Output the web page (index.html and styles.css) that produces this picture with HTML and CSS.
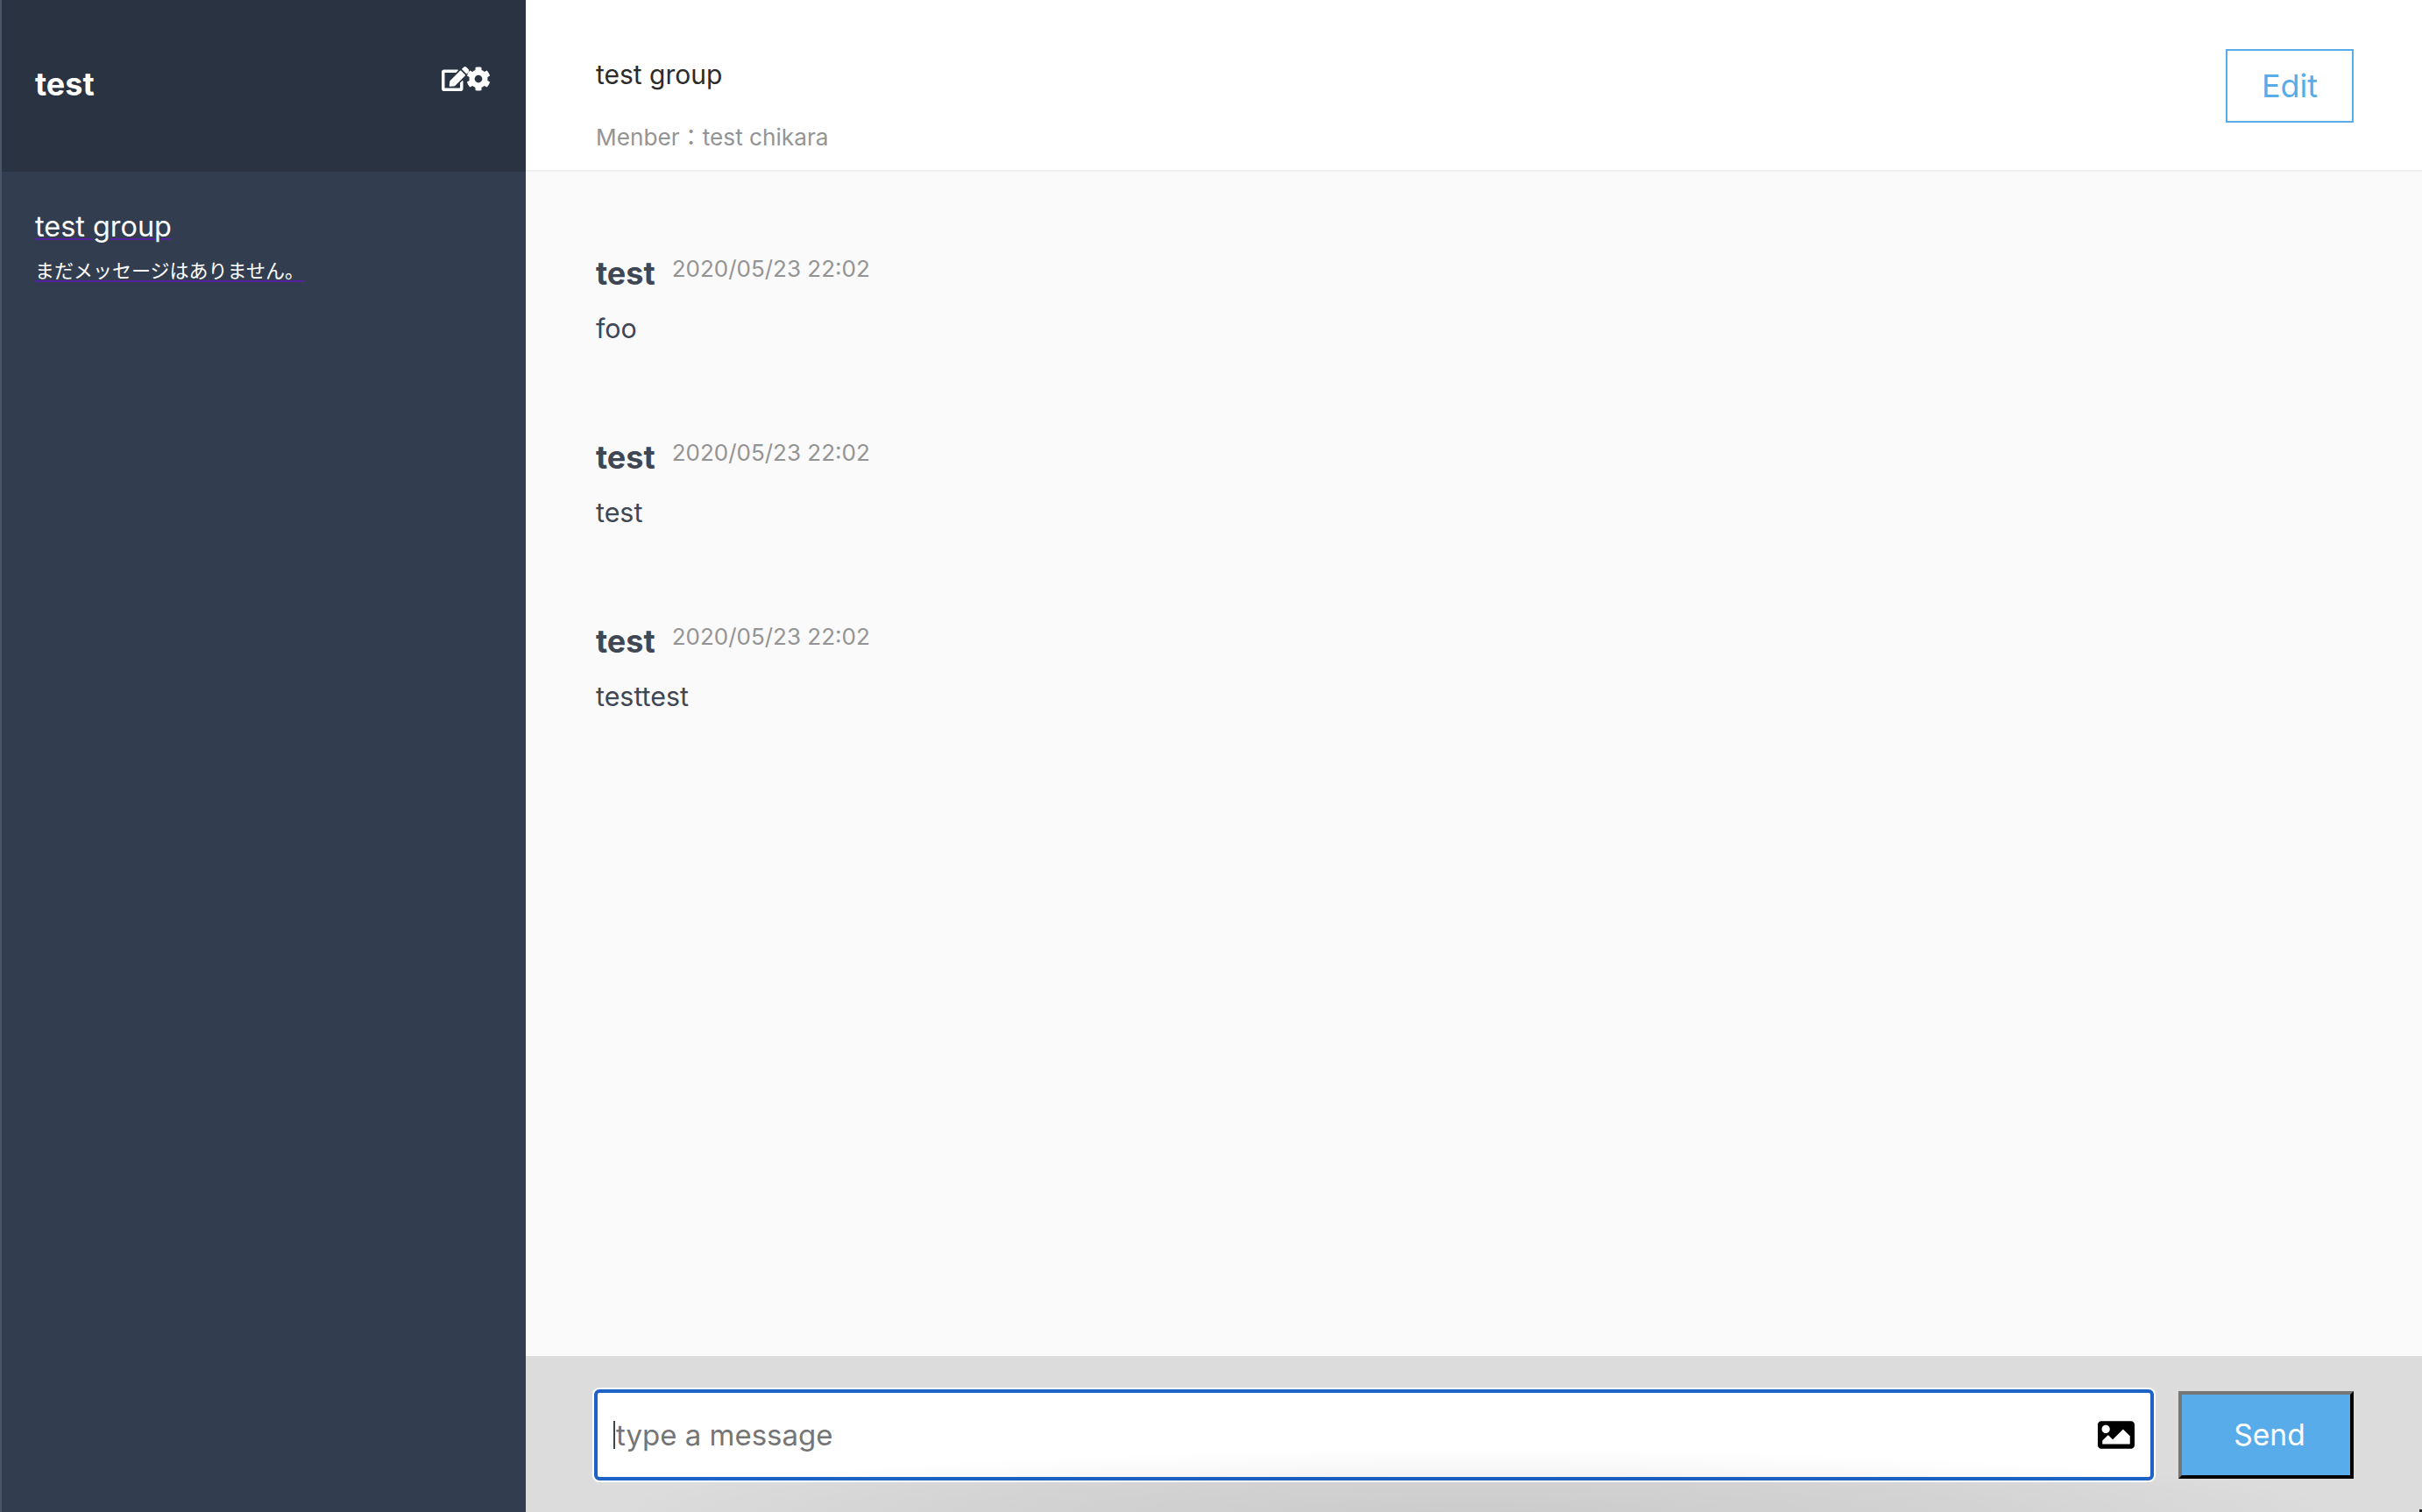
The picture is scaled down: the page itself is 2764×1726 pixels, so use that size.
FILE: index.html
```html
<!DOCTYPE html>
<html lang="ja">
<head>
<meta charset="utf-8">
<title>test</title>
<link rel="stylesheet" href="styles.css">
</head>
<body>
<div class="app">
  <aside class="sidebar">
    <header class="side-head">
      <h1 class="user-name">test</h1>
      <div class="side-icons">
        <svg class="icon-edit" viewBox="0 0 576 512"><path fill="currentColor" d="M402.6 83.2l90.2 90.2c3.8 3.8 3.8 10 0 13.8L274.4 405.6l-92.8 10.3c-12.4 1.4-22.9-9.1-21.5-21.5l10.3-92.8L388.8 83.2c3.8-3.8 10-3.8 13.8 0zm162-22.9l-48.8-48.8c-15.2-15.2-39.9-15.2-55.2 0l-35.4 35.4c-3.8 3.8-3.8 10 0 13.8l90.2 90.2c3.8 3.8 10 3.8 13.8 0l35.4-35.4c15.2-15.3 15.2-40 0-55.2zM384 346.2V448H64V128h229.8c3.2 0 6.2-1.3 8.5-3.5l40-40c7.6-7.6 2.2-20.5-8.5-20.5H48C21.5 64 0 85.5 0 112v352c0 26.5 21.5 48 48 48h352c26.5 0 48-21.5 48-48V306.2c0-10.7-12.9-16-20.5-8.5l-40 40c-2.2 2.3-3.5 5.3-3.5 8.5z"/></svg>
        <svg class="icon-cog" viewBox="0 0 512 512"><path fill="currentColor" d="M487.4 315.7l-42.6-24.6c4.3-23.2 4.3-47 0-70.2l42.6-24.6c4.9-2.8 7.1-8.6 5.5-14-11.1-35.6-30-67.8-54.7-94.6-3.8-4.1-10-5.1-14.8-2.3L380.8 110c-17.9-15.4-38.5-27.3-60.8-35.1V25.8c0-5.6-3.9-10.5-9.4-11.7-36.7-8.2-74.3-7.8-109.2 0-5.5 1.2-9.4 6.1-9.4 11.7V75c-22.2 7.9-42.8 19.8-60.8 35.1L88.7 85.5c-4.9-2.8-11-1.9-14.8 2.3-24.7 26.7-43.6 58.9-54.7 94.6-1.7 5.4.6 11.2 5.5 14L67.3 221c-4.3 23.2-4.3 47 0 70.2l-42.6 24.6c-4.9 2.8-7.1 8.6-5.5 14 11.1 35.6 30 67.8 54.7 94.6 3.8 4.1 10 5.1 14.8 2.3l42.6-24.6c17.9 15.4 38.5 27.3 60.8 35.1v49.2c0 5.6 3.9 10.5 9.4 11.7 36.7 8.2 74.3 7.8 109.2 0 5.5-1.2 9.4-6.1 9.4-11.7v-49.2c22.2-7.9 42.8-19.8 60.8-35.1l42.6 24.6c4.9 2.8 11 1.9 14.8-2.3 24.7-26.7 43.6-58.9 54.7-94.6 1.5-5.5-.7-11.3-5.6-14.1zM256 336c-44.1 0-80-35.9-80-80s35.9-80 80-80 80 35.9 80 80-35.9 80-80 80z"/></svg>
      </div>
    </header>
    <nav class="group-list">
      <a class="group-link" href="#">
        <span class="group-name">test group</span>
        <span class="group-last">まだメッセージはありません。</span>
      </a>
    </nav>
  </aside>
  <main class="chat">
    <header class="chat-head">
      <div class="chat-info">
        <div class="chat-title">test group</div>
        <div class="chat-members">Menber：test chikara</div>
      </div>
      <a class="edit-btn" href="#">Edit</a>
    </header>
    <section class="messages">
      <article class="message">
        <div class="message-meta"><span class="message-user">test</span><span class="message-date">2020/05/23 22:02</span></div>
        <p class="message-text">foo</p>
      </article>
      <article class="message">
        <div class="message-meta"><span class="message-user">test</span><span class="message-date">2020/05/23 22:02</span></div>
        <p class="message-text">test</p>
      </article>
      <article class="message">
        <div class="message-meta"><span class="message-user">test</span><span class="message-date">2020/05/23 22:02</span></div>
        <p class="message-text">testtest</p>
      </article>
    </section>
    <form class="composer">
      <div class="composer-shadow"></div>
      <label class="input-box">
        <span class="caret"></span>
        <input class="text-input" type="text" placeholder="type a message">
        <svg class="icon-image" viewBox="0 0 512 512"><path fill="currentColor" d="M464 448H48c-26.51 0-48-21.49-48-48V112c0-26.51 21.49-48 48-48h416c26.51 0 48 21.49 48 48v288c0 26.51-21.49 48-48 48zM112 120c-30.928 0-56 25.072-56 56s25.072 56 56 56 56-25.072 56-56-25.072-56-56-56zM64 384h384V272l-87.515-87.515c-4.686-4.686-12.284-4.686-16.971 0L208 320l-55.515-55.515c-4.686-4.686-12.284-4.686-16.971 0L64 336v48z"/></svg>
      </label>
      <button class="send-btn" type="button">Send</button>
    </form>
  </main>
</div>
</body>
</html>
```

FILE: styles.css
```css
* { box-sizing: border-box; }
html, body { margin: 0; height: 100%; }
body {
  font-family: Inter, "Noto Sans CJK JP", sans-serif;
  background: #fff;
  color: #404754;
  overflow: hidden;
}
.app { display: flex; height: 100vh; }

.sidebar {
  width: 600px;
  flex: none;
  background: #323e50;
  color: #fff;
  border-left: 2px solid #4a5568;
  display: flex;
  flex-direction: column;
}
.side-head {
  height: 196px;
  flex: none;
  background: #2a3342;
  padding: 0 40px 0 38px;
  display: flex;
  justify-content: space-between;
  align-items: flex-start;
}
.user-name {
  margin: 74px 0 0;
  font-size: 36px;
  line-height: 44px;
  font-weight: 700;
}
.side-icons { display: flex; margin-top: 76px; }
.icon-edit { width: 31.5px; height: 28px; display: block; }
.icon-cog { width: 28px; height: 28px; margin-left: -3px; display: block; }

.group-list { padding: 40px 38px; }
.group-link {
  display: inline-flex;
  flex-direction: column;
  align-items: flex-start;
  color: #fff;
  text-decoration: none;
}
.group-name,
.group-last {
  text-decoration: underline;
  text-decoration-color: #56209e;
  text-decoration-thickness: 2px;
}
.group-name { font-size: 32.4px; line-height: 46px; text-underline-offset: 2px; }
.group-last {
  font-size: 22px;
  line-height: 32px;
  margin-top: 11px;
  text-underline-offset: 3px;
  text-decoration-skip-ink: none;
}

.chat { flex: 1; min-width: 0; display: flex; flex-direction: column; }
.chat-head {
  height: 196px;
  flex: none;
  background: #fff;
  border-bottom: 2px solid #eee;
  padding: 0 78px 0 80px;
  display: flex;
  justify-content: space-between;
  align-items: flex-start;
}
.chat-title { font-size: 30px; line-height: 40px; margin-top: 65px; color: #2b2b2b; }
.chat-members { font-size: 26.2px; line-height: 36px; margin-top: 34px; color: #949494; }
.edit-btn {
  margin-top: 56px;
  width: 146px;
  height: 84px;
  border: 2px solid #58ace9;
  color: #58ace9;
  font-size: 36px;
  display: flex;
  align-items: center;
  justify-content: center;
  text-decoration: none;
}

.messages {
  flex: 1;
  min-height: 0;
  background: #fafafa;
  padding: 88px 80px 0;
  display: flex;
  flex-direction: column;
  gap: 90px;
}
.message { height: 120px; }
.message-meta { display: flex; align-items: flex-start; gap: 19px; height: 52px; }
.message-user { font-size: 36px; line-height: 44px; font-weight: 700; margin-top: 6px; }
.message-date { font-size: 26px; line-height: 36px; color: #949494; margin-top: 5px; }
.message-text { margin: 19px 0 0; font-size: 30.4px; line-height: 40px; }

.composer {
  position: relative;
  height: 178px;
  flex: none;
  background: #dcdcdc;
  padding: 40px 78px 0 78px;
  display: flex;
  align-items: flex-start;
  gap: 28px;
}
.composer::after {
  content: "";
  position: absolute;
  right: 0;
  bottom: 0;
  width: 3px;
  height: 3px;
  background: #222;
}
.composer-shadow {
  position: absolute;
  left: 0;
  right: 0;
  bottom: 0;
  height: 100px;
  pointer-events: none;
  z-index: 2;
  background: radial-gradient(ellipse 1000px 72px at 50% 100%, rgba(0,0,0,.075), rgba(0,0,0,.045) 55%, rgba(0,0,0,0));
}
.input-box {
  position: relative;
  flex: 1;
  min-width: 0;
  height: 104px;
  margin-top: -2px;
  background: #fff;
  border: 4px solid #1f62c7;
  border-radius: 6px;
  box-shadow: 0 0 0 2px #fff;
  display: flex;
  align-items: center;
  padding: 0 18px 0 21px;
}
.caret {
  position: absolute;
  left: 18px;
  top: 32px;
  width: 2px;
  height: 32px;
  background: #3d4451;
}
.text-input {
  flex: 1;
  min-width: 0;
  border: 0;
  outline: 0;
  padding: 0;
  background: transparent;
  font: inherit;
  font-size: 33px;
  color: #3d4451;
}
.text-input::placeholder { color: #757575; opacity: 1; }
.icon-image { width: 42px; height: 42px; color: #000; flex: none; display: block; }
.send-btn {
  width: 200px;
  height: 100px;
  flex: none;
  background: #58ace9;
  color: #fff;
  border: 4px outset #767676;
  border-color: #767676 #222 #222 #767676;
  font: inherit;
  font-size: 33.5px;
  padding: 0 0 0 8px;
}
```
